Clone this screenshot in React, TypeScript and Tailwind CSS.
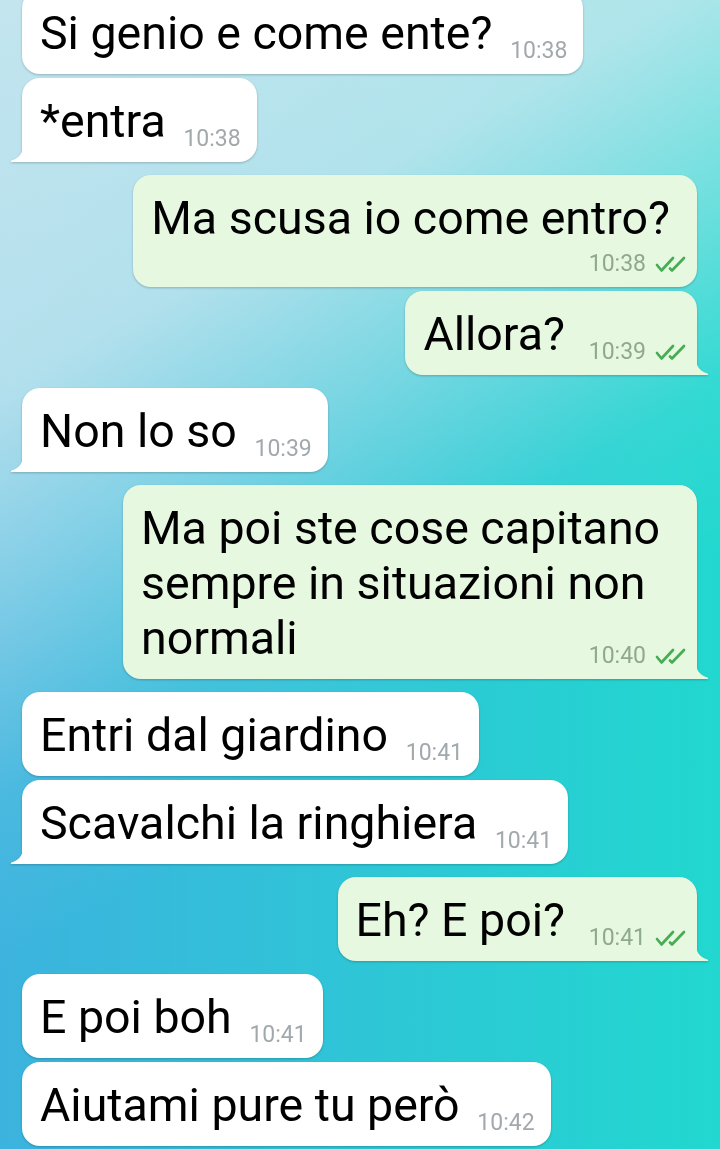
import clsx from "clsx";

type Message = {
  text: string;
  time: string;
  out?: boolean;
  tail?: boolean;
  timeBelow?: boolean;
  newGroup?: boolean;
};

const messages: Message[] = [
  { text: "Si genio e come ente?", time: "10:38" },
  { text: "*entra", time: "10:38", tail: true },
  { text: "Ma scusa io come entro?", time: "10:38", out: true, timeBelow: true, newGroup: true },
  { text: "Allora?", time: "10:39", out: true, tail: true },
  { text: "Non lo so", time: "10:39", tail: true, newGroup: true },
  {
    text: "Ma poi ste cose capitano sempre in situazioni non normali",
    time: "10:40",
    out: true,
    tail: true,
    newGroup: true,
  },
  { text: "Entri dal giardino", time: "10:41", newGroup: true },
  { text: "Scavalchi la ringhiera", time: "10:41", tail: true },
  { text: "Eh? E poi?", time: "10:41", out: true, tail: true, newGroup: true },
  { text: "E poi boh", time: "10:41", newGroup: true },
  { text: "Aiutami pure tu però", time: "10:42" },
];

function Ticks() {
  return (
    <svg width="31" height="17" viewBox="0 0 31 17" fill="none" stroke="#47ad55" strokeWidth="2.7" strokeLinecap="round" strokeLinejoin="round">
      <path d="M2 9 L6.5 14.5 L18 2" />
      <path d="M15 12.5 L17 14.5 L29 2" />
    </svg>
  );
}

function Tail({ out, color }: { out?: boolean; color: string }) {
  if (out) {
    return (
      <svg className="absolute bottom-0 right-[-12px]" width="13" height="16" viewBox="0 0 13 16">
        <path d="M0 0 C0 7 4 12 11.5 14.6 C12.6 15 12.4 16 11.4 16 L0 16 Z" fill={color} />
      </svg>
    );
  }
  return (
    <svg className="absolute bottom-0 left-[-12px]" width="13" height="16" viewBox="0 0 13 16">
      <path d="M13 0 C13 7 9 12 1.5 14.6 C0.4 15 0.6 16 1.6 16 L13 16 Z" fill={color} />
    </svg>
  );
}

function Bubble({ m }: { m: Message }) {
  const out = !!m.out;
  return (
    <div
      className={clsx(
        "flex",
        out ? "justify-end pr-[23px]" : "justify-start pl-[22px]",
        m.newGroup ? "mt-[13px]" : "mt-[4px]"
      )}
    >
      <div
        className={clsx(
          "relative max-w-[574px] rounded-[18px] pt-[16px] pb-[13px] pl-[18px] drop-shadow-[0_1px_1px_rgba(0,0,0,0.22)]",
          out ? "bg-[#e6f8e0]" : "bg-white pr-[16px]",
          out && (m.timeBelow ? "pr-[27px]" : "pr-[11px]"),
          m.tail && (out ? "rounded-br-none" : "rounded-bl-none")
        )}
      >
        <p className="text-[0px] leading-[0]">
          <span className="text-[46.5px] leading-[55px] text-black">{m.text}</span>
          {m.timeBelow ? (
            <span className="block h-[28px]" />
          ) : (
            <span className={clsx("inline-block h-[28px]", out ? "w-[121px]" : "w-[75px]")} />
          )}
        </p>
        <div
          className={clsx(
            "absolute bottom-[11px] flex items-center gap-[9px] text-[23px] leading-[24px]",
            out ? "right-[11px] text-[#90a88e]" : "right-[16px] text-[#a2a9ad]"
          )}
        >
          <span>{m.time}</span>
          {out && <Ticks />}
        </div>
        {m.tail && <Tail out={out} color={out ? "#e6f8e0" : "#ffffff"} />}
      </div>
    </div>
  );
}

export default function App() {
  return (
    <div className="h-[1149px] w-full overflow-hidden bg-[image:linear-gradient(150deg,rgba(205,233,240,0.93)_0%,rgba(205,233,240,0.82)_25%,rgba(205,233,240,0.5)_37%,rgba(205,233,240,0.1)_51%,rgba(205,233,240,0)_62%),linear-gradient(to_right,#3cb3de,#21d8cf)] font-['Roboto',sans-serif]">
      <div className="mt-[-14px] flex flex-col">
        {messages.map((m, i) => (
          <Bubble key={i} m={m} />
        ))}
      </div>
    </div>
  );
}
